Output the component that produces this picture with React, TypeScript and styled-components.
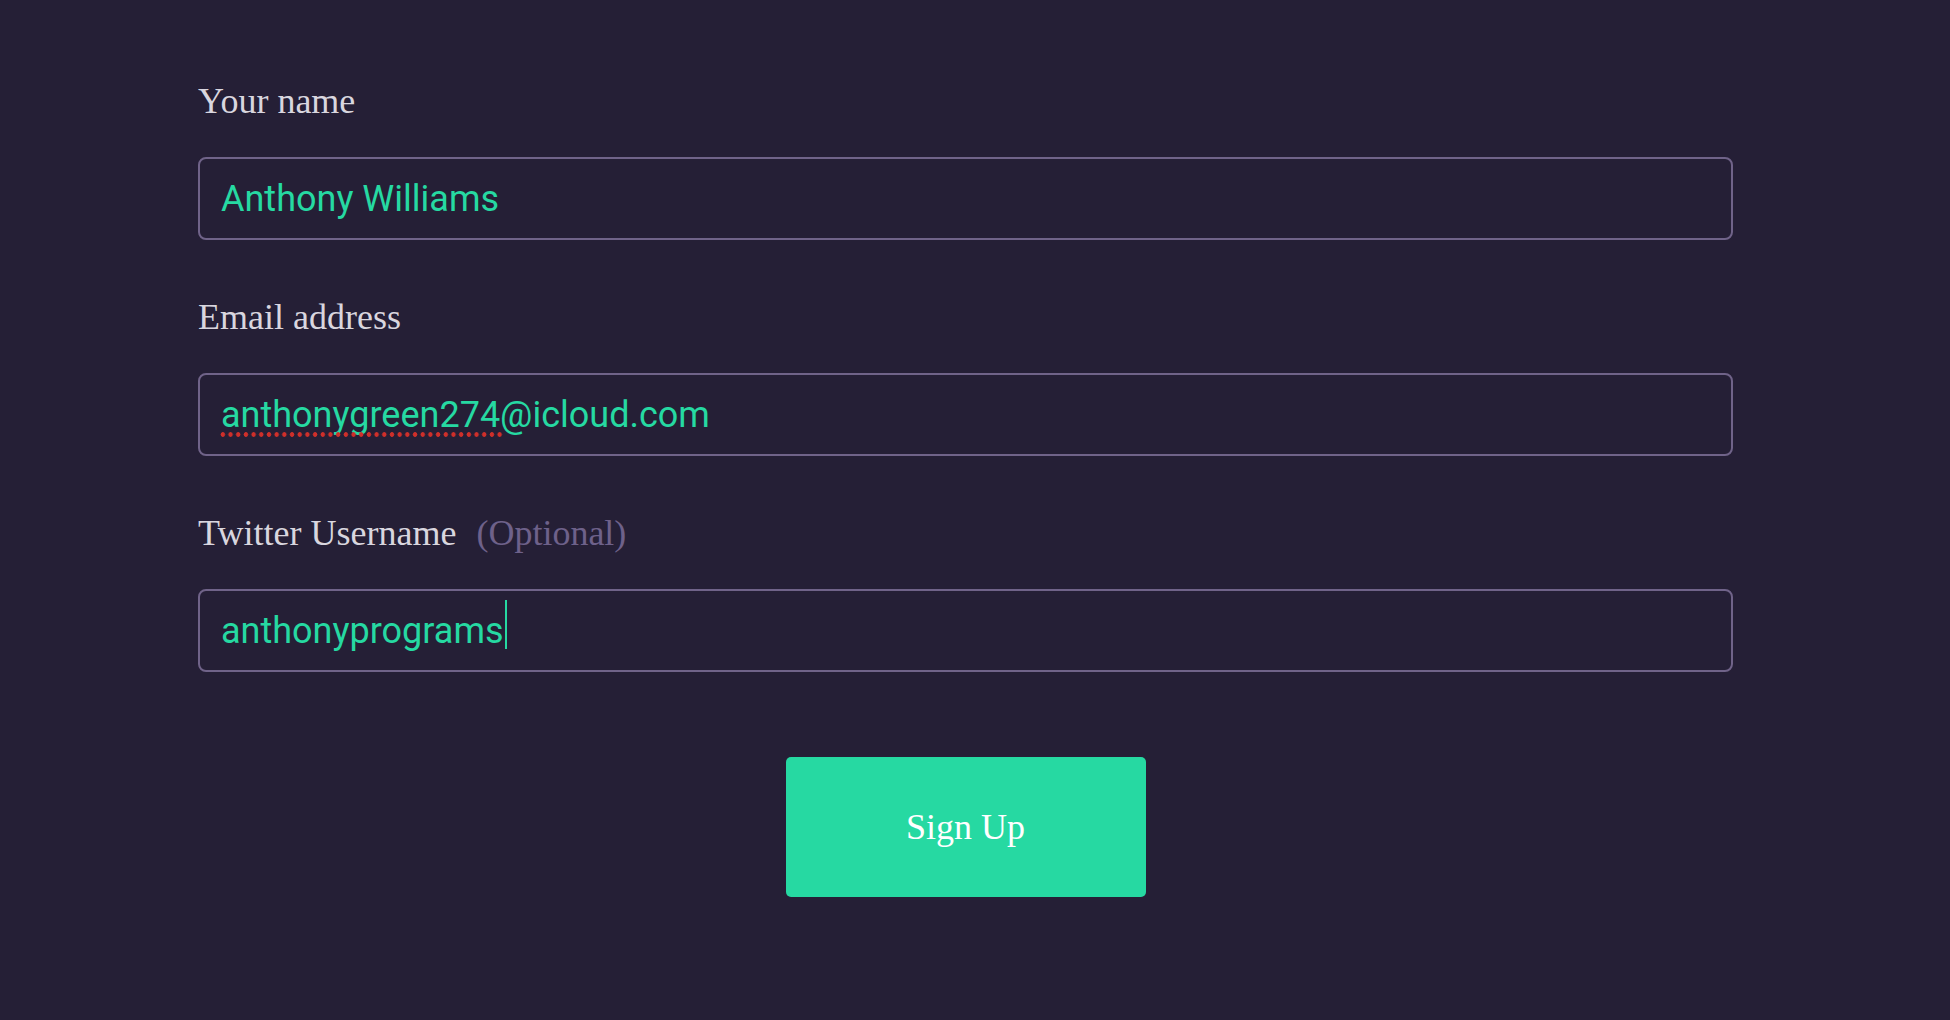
import React from "react";
import styled, { createGlobalStyle } from "styled-components";

const colors = {
	bg: "#251f36",
	border: "#706389",
	label: "#d9d6df",
	muted: "#6e618a",
	accent: "#26d9a2",
	spell: "#cf2f2a",
};

const GlobalStyle = createGlobalStyle`
	html, body {
		margin: 0;
		padding: 0;
		background: ${colors.bg};
	}
	* {
		box-sizing: border-box;
	}
`;

const Page = styled.main`
	min-height: 100vh;
	padding: 81px 0 0 198px;
	background: ${colors.bg};
`;

const Form = styled.form`
	width: 1535px;
	display: flex;
	flex-direction: column;
	gap: 57px;
`;

const Field = styled.div`
	display: flex;
	flex-direction: column;
	gap: 36px;
`;

const Label = styled.label`
	font-family: "Liberation Serif", "Times New Roman", serif;
	font-size: 36px;
	line-height: 40px;
	color: ${colors.label};
`;

const Optional = styled.span`
	color: ${colors.muted};
	margin-left: 20px;
`;

const InputWrap = styled.div`
	position: relative;
	height: 83px;
`;

const TextInput = styled.input`
	width: 100%;
	height: 100%;
	padding: 0 21px;
	border: 2px solid ${colors.border};
	border-radius: 8px;
	background: transparent;
	color: ${colors.accent};
	caret-color: ${colors.accent};
	font-family: Roboto, "Noto Sans", sans-serif;
	font-size: 36px;
	outline: none;
`;

const Overlay = styled.div`
	position: absolute;
	inset: 0;
	padding: 0 23px;
	display: flex;
	align-items: center;
	font-family: Roboto, "Noto Sans", sans-serif;
	font-size: 36px;
	line-height: normal;
	pointer-events: none;
	white-space: pre;
`;

const Ghost = styled.span<{ $misspelled?: boolean }>`
	position: relative;
	color: transparent;

	${(p) =>
		p.$misspelled &&
		`
		&::after {
			content: "";
			position: absolute;
			left: -2px;
			right: -4px;
			bottom: -1px;
			height: 5px;
			background-image: radial-gradient(circle, ${colors.spell} 2px, transparent 2.6px);
			background-size: 7.7px 5px;
			background-repeat: repeat-x;
		}
	`}
`;

const Caret = styled.span`
	display: inline-block;
	width: 2px;
	height: 49px;
	background: ${colors.accent};
	transform: translateY(-6px);
	margin-left: 1px;
`;

const Actions = styled.div`
	display: flex;
	justify-content: center;
	padding-top: 28px;
`;

const SubmitButton = styled.button`
	width: 360px;
	height: 140px;
	border: none;
	border-radius: 5px;
	background: ${colors.accent};
	color: #ffffff;
	font-family: "Liberation Serif", "Times New Roman", serif;
	font-size: 36px;
	cursor: pointer;
`;

export default function App() {
	return (
		<>
			<GlobalStyle />
			<Page>
				<Form onSubmit={(e) => e.preventDefault()}>
					<Field>
						<Label htmlFor="name">Your name</Label>
						<InputWrap>
							<TextInput id="name" defaultValue="Anthony Williams" spellCheck={false} />
						</InputWrap>
					</Field>
					<Field>
						<Label htmlFor="email">Email address</Label>
						<InputWrap>
							<TextInput id="email" defaultValue="anthonygreen274@icloud.com" spellCheck={false} />
							<Overlay>
								<Ghost $misspelled>anthonygreen274</Ghost>
							</Overlay>
						</InputWrap>
					</Field>
					<Field>
						<Label htmlFor="twitter">
							Twitter Username<Optional>(Optional)</Optional>
						</Label>
						<InputWrap>
							<TextInput id="twitter" defaultValue="anthonyprograms" spellCheck={false} />
							<Overlay>
								<Ghost>anthonyprograms</Ghost>
								<Caret />
							</Overlay>
						</InputWrap>
					</Field>
					<Actions>
						<SubmitButton type="submit">Sign Up</SubmitButton>
					</Actions>
				</Form>
			</Page>
		</>
	);
}
